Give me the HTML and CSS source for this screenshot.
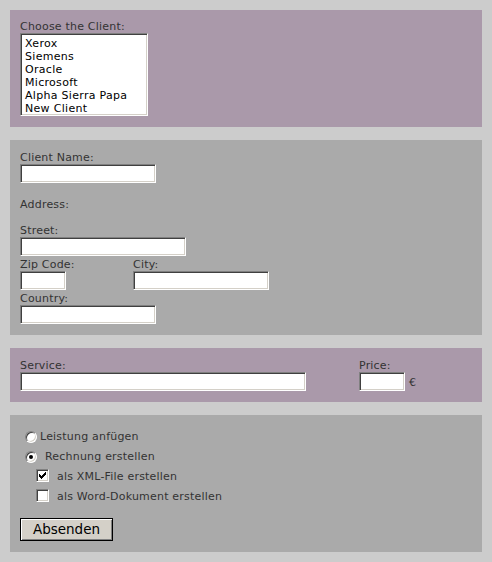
FILE: index.html
```html
<!DOCTYPE html>
<html lang="de">
<head>
<meta charset="utf-8">
<title>Client Form</title>
<link rel="stylesheet" href="styles.css">
</head>
<body>
<form class="form">
  <section class="panel purple">
    <div class="field">
      <label class="lbl">Choose the Client:</label>
      <div class="listbox" role="listbox">
        <div class="option">Xerox</div>
        <div class="option">Siemens</div>
        <div class="option">Oracle</div>
        <div class="option">Microsoft</div>
        <div class="option">Alpha Sierra Papa</div>
        <div class="option">New Client</div>
      </div>
    </div>
  </section>

  <section class="panel gray">
    <div class="field">
      <label class="lbl">Client Name:</label>
      <input class="txt w136" type="text">
    </div>
    <div class="lbl address">Address:</div>
    <div class="stack">
      <div class="field">
        <label class="lbl">Street:</label>
        <input class="txt w166" type="text">
      </div>
      <div class="zipcity">
        <div class="field">
          <label class="lbl">Zip Code:</label>
          <input class="txt w46" type="text">
        </div>
        <div class="field">
          <label class="lbl">City:</label>
          <input class="txt w136" type="text">
        </div>
      </div>
      <div class="field">
        <label class="lbl">Country:</label>
        <input class="txt w136" type="text">
      </div>
    </div>
  </section>

  <section class="panel purple">
    <div class="servicerow">
      <div class="field service">
        <label class="lbl">Service:</label>
        <input class="txt w286" type="text">
      </div>
      <div class="field">
        <label class="lbl">Price:</label>
        <div class="price">
          <input class="txt w46" type="text">
          <span class="euro">€</span>
        </div>
      </div>
    </div>
  </section>

  <section class="panel gray actions">
    <div class="choice">
      <span class="radio"></span><span class="ctext">Leistung anfügen</span>
    </div>
    <div class="choice">
      <span class="radio checked"></span><span class="ctext wide">Rechnung erstellen</span>
    </div>
    <div class="choice sub">
      <span class="check">
        <svg width="7" height="7" viewBox="0 0 7 7"><path d="M6 0h1v1h-1zM5 1h2v1h-2zM0 2h1v1h-1zM4 2h3v1h-3zM0 3h2v1h-2zM3 3h3v1h-3zM0 4h5v1h-5zM1 5h3v1h-3zM2 6h1v1h-1z" fill="#000"/></svg>
      </span><span class="ctext">als XML-File erstellen</span>
    </div>
    <div class="choice sub">
      <span class="check"></span><span class="ctext">als Word-Dokument erstellen</span>
    </div>
    <button type="button" class="btn">Absenden</button>
  </section>
</form>
</body>
</html>
```
FILE: styles.css
```css
html, body {
  margin: 0;
  padding: 0;
}
body {
  background: #cccccc;
  font-family: "DejaVu Sans", Verdana, sans-serif;
  font-size: 11px;
  color: #333333;
}
.form {
  padding: 10px;
  width: 472px;
  display: flex;
  flex-direction: column;
  gap: 13px;
}
.panel {
  padding: 12px 10px 11px 10px;
}
.purple { background: #aa99aa; }
.gray { background: #aaaaaa; }
.panel.purple:first-child { padding-top: 11px; }

.field {
  display: flex;
  flex-direction: column;
  align-items: flex-start;
}
.lbl {
  display: block;
  line-height: 12px;
  letter-spacing: 0.2px;
  color: #333333;
}
.address {
  margin: 16px 0 14px 0;
}
.stack {
  display: flex;
  flex-direction: column;
  gap: 3px;
}
.zipcity {
  display: grid;
  grid-template-columns: 113px auto;
}

.txt, .listbox {
  box-sizing: border-box;
  border: 1px solid;
  border-color: #808080 #ffffff #ffffff #808080;
  box-shadow: inset 1px 1px 0 #404040, inset -1px -1px 0 #d4d0c8;
  background: #ffffff;
  margin: 0;
  padding: 0 3px;
  font: inherit;
  outline: none;
}
.txt {
  height: 19px;
  display: block;
}
.w46 { width: 46px; }
.w136 { width: 136px; }
.w166 { width: 166px; }
.w286 { width: 286px; }

.listbox {
  width: 128px;
  height: 83px;
  padding: 3px 3px 0 4px;
  overflow: hidden;
}
.option {
  line-height: 13px;
  color: #000;
  letter-spacing: 0.3px;
  white-space: nowrap;
}

.servicerow {
  display: flex;
}
.service {
  width: 339px;
}
.price {
  display: flex;
  align-items: center;
  gap: 4px;
}
.euro {
  padding-top: 2px;
}

.actions {
  padding: 12px 10px 11px 10px;
}
.choice {
  display: flex;
  align-items: center;
  height: 20px;
  line-height: 20px;
  padding-left: 5px;
}
.choice.sub {
  padding-left: 16px;
}
.ctext {
  letter-spacing: 0.2px;
  margin-left: 3px;
}
.ctext.wide { margin-left: 8px; }
.sub .ctext { margin-left: 8px; }

.radio {
  flex-shrink: 0;
  box-sizing: border-box;
  width: 12px;
  height: 12px;
  border-radius: 50%;
  border: 1px solid;
  border-color: #808080 #ffffff #ffffff #808080;
  box-shadow: inset 1px 1px 0 #404040, inset -1px -1px 0 #d4d0c8;
  background: #ffffff;
  display: flex;
  align-items: center;
  justify-content: center;
}
.radio.checked::after {
  content: "";
  width: 4px;
  height: 4px;
  border-radius: 50%;
  background: #000;
}
.check {
  flex-shrink: 0;
  box-sizing: border-box;
  width: 13px;
  height: 13px;
  border: 1px solid;
  border-color: #808080 #ffffff #ffffff #808080;
  box-shadow: inset 1px 1px 0 #404040, inset -1px -1px 0 #d4d0c8;
  background: #ffffff;
  display: flex;
  align-items: center;
  justify-content: center;
  margin-top: -3px;
}
.check svg { display: block; }

.btn {
  display: block;
  margin-top: 11px;
  width: 93px;
  height: 23px;
  box-sizing: border-box;
  border: 1px solid #000;
  background: #d4d0c8;
  box-shadow: inset 1px 1px 0 #ffffff, inset -1px -1px 0 #808080;
  font-family: "DejaVu Sans", Verdana, sans-serif;
  font-size: 13.5px;
  color: #000;
  padding: 0;
  line-height: 21px;
}
```
